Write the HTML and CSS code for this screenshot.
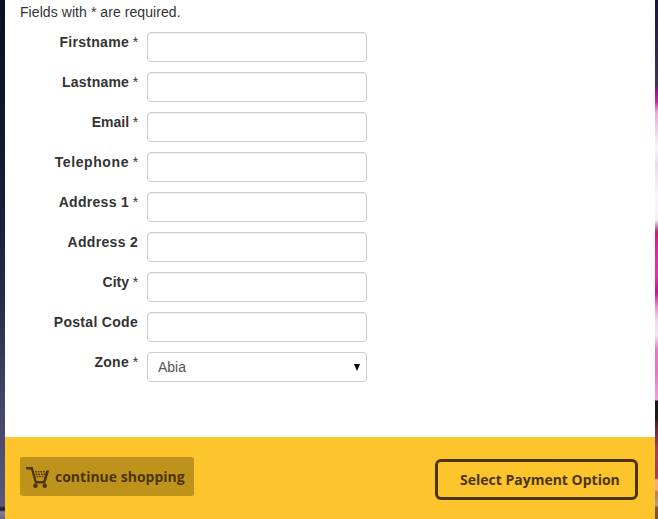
FILE: index.html
```html
<!DOCTYPE html>
<html lang="en">
<head>
<meta charset="utf-8">
<title>Checkout</title>
<link rel="stylesheet" href="styles.css">
</head>
<body>
<div class="backdrop-left"></div>
<main class="page">
  <form class="details">
    <p class="note">Fields with <span>*</span> are required.</p>
    <div class="row"><label for="firstname">Firstname<span class="req"> *</span></label><input id="firstname" type="text"></div>
    <div class="row"><label class="snug" for="lastname">Lastname<span class="req"> *</span></label><input id="lastname" type="text"></div>
    <div class="row"><label class="tight" for="email">Email<span class="req"> *</span></label><input id="email" type="text"></div>
    <div class="row"><label class="loose" for="telephone">Telephone<span class="req"> *</span></label><input id="telephone" type="text"></div>
    <div class="row"><label for="address1">Address 1<span class="req"> *</span></label><input id="address1" type="text"></div>
    <div class="row"><label for="address2">Address 2</label><input id="address2" type="text"></div>
    <div class="row"><label class="tight" for="city">City<span class="req"> *</span></label><input id="city" type="text"></div>
    <div class="row"><label for="postcode">Postal Code</label><input id="postcode" type="text"></div>
    <div class="row"><label>Zone<span class="req"> *</span></label>
      <div class="select"><span>Abia</span><svg width="6" height="7" viewBox="0 0 6 7"><path d="M0 0h6L3 7z"/></svg></div>
    </div>
  </form>
  <footer class="actions">
    <a class="continue">
      <svg class="cart" width="24" height="23" viewBox="0 0 24 23">
        <path d="M0 2H6.7L10.6 16H17.2L20.4 5.5H23.2L19.2 18.5H9L5 4.5H0.5Z"/>
        <path class="mesh" d="M9 6.7H20M9.6 9.2H19.5M10.3 11.6H18.5"/>
        <circle cx="9.4" cy="20.8" r="2.2"/><circle cx="18.7" cy="20.8" r="2.2"/>
      </svg>
      <span>continue shopping</span>
    </a>
    <a class="payment">Select Payment Option</a>
  </footer>
</main>
<div class="backdrop-right"></div>
</body>
</html>
```
FILE: styles.css
```css
* { box-sizing: border-box; }
body {
  margin: 0;
  height: 519px;
  overflow: hidden;
  display: grid;
  grid-template-columns: 5px 650px 3px;
  font: 14px/20px "Liberation Sans", Arial, sans-serif;
  color: #333;
}
.backdrop-left {
  background: linear-gradient(#0d1020 0, #12152a 100px, #1e2040 235px, #2b2d4c 310px, #444466 400px, #5a577f 506px, #262235 508px, #262235 510px, #858091 512px, #69647c 519px);
}
.backdrop-right {
  background: linear-gradient(#1b1638 0, #423353 85px, #831681 89px, #c82b9c 102px, #eda9d8 112px, #efd0e9 130px, #fbf2fa 148px, #ecdbee 165px, #f8f5f8 195px, #f4eff4 220px, #a7589b 229px, #c71f63 233px, #d52b98 245px, #dc36aa 275px, #c41889 292px, #e786c6 306px, #f1d7ef 320px, #f6e3f4 335px, #e37abf 350px, #e477c0 370px, #ef9fda 400px, #181719 401px, #1e1819 418px, #51252a 424px, #a3445c 450px, #a53d54 478px, #f8ac75 480px, #f6a978 490px, #b77e50 492px, #c59c71 505px, #855236 508px, #825126 519px);
}
.page { display: flex; flex-direction: column; background: #fff; }
.details { height: 437px; padding: 2px 15px 0; }
.note { margin: 0 0 10px; letter-spacing: 0.07px; }
.row { display: flex; gap: 9px; height: 30px; margin-bottom: 10px; }
label { width: 118px; text-align: right; font-weight: bold; letter-spacing: 0.3px; }
.snug { letter-spacing: 0.2px; }
.tight { letter-spacing: 0; }
.loose { letter-spacing: 0.6px; }
.req { font-weight: normal; letter-spacing: -0.2px; }
input, .select {
  width: 220px;
  height: 30px;
  border: 1px solid #ccc;
  border-radius: 4px;
  background: #fff;
}
input { box-shadow: inset 0 1px 1px rgba(0, 0, 0, 0.075); padding: 4px 6px; }
.select { display: flex; align-items: center; justify-content: space-between; padding: 0 6px 0 10px; color: #555; }
.select svg { fill: #000; }
.actions {
  flex: 1;
  display: flex;
  justify-content: space-between;
  align-items: flex-start;
  padding: 20px 17px 0 15px;
  background: #fdc42c;
  color: #4c340a;
  font: bold 14px/20px "Open Sans", sans-serif;
}
.continue {
  display: flex;
  align-items: center;
  gap: 5px;
  width: 174px;
  height: 39px;
  padding-left: 6px;
  border-radius: 3px;
  background: #be931b;
  white-space: nowrap;
}
.cart { fill: #4c340a; }
.cart .mesh { fill: none; stroke: #4c340a; stroke-width: 1.5; stroke-dasharray: 1.6 1.1; }
.payment {
  width: 203px;
  height: 41px;
  margin-top: 2px;
  border: 3px solid #4c340a;
  border-radius: 6px;
  padding: 8px 0 0 22px;
  white-space: nowrap;
}
```
